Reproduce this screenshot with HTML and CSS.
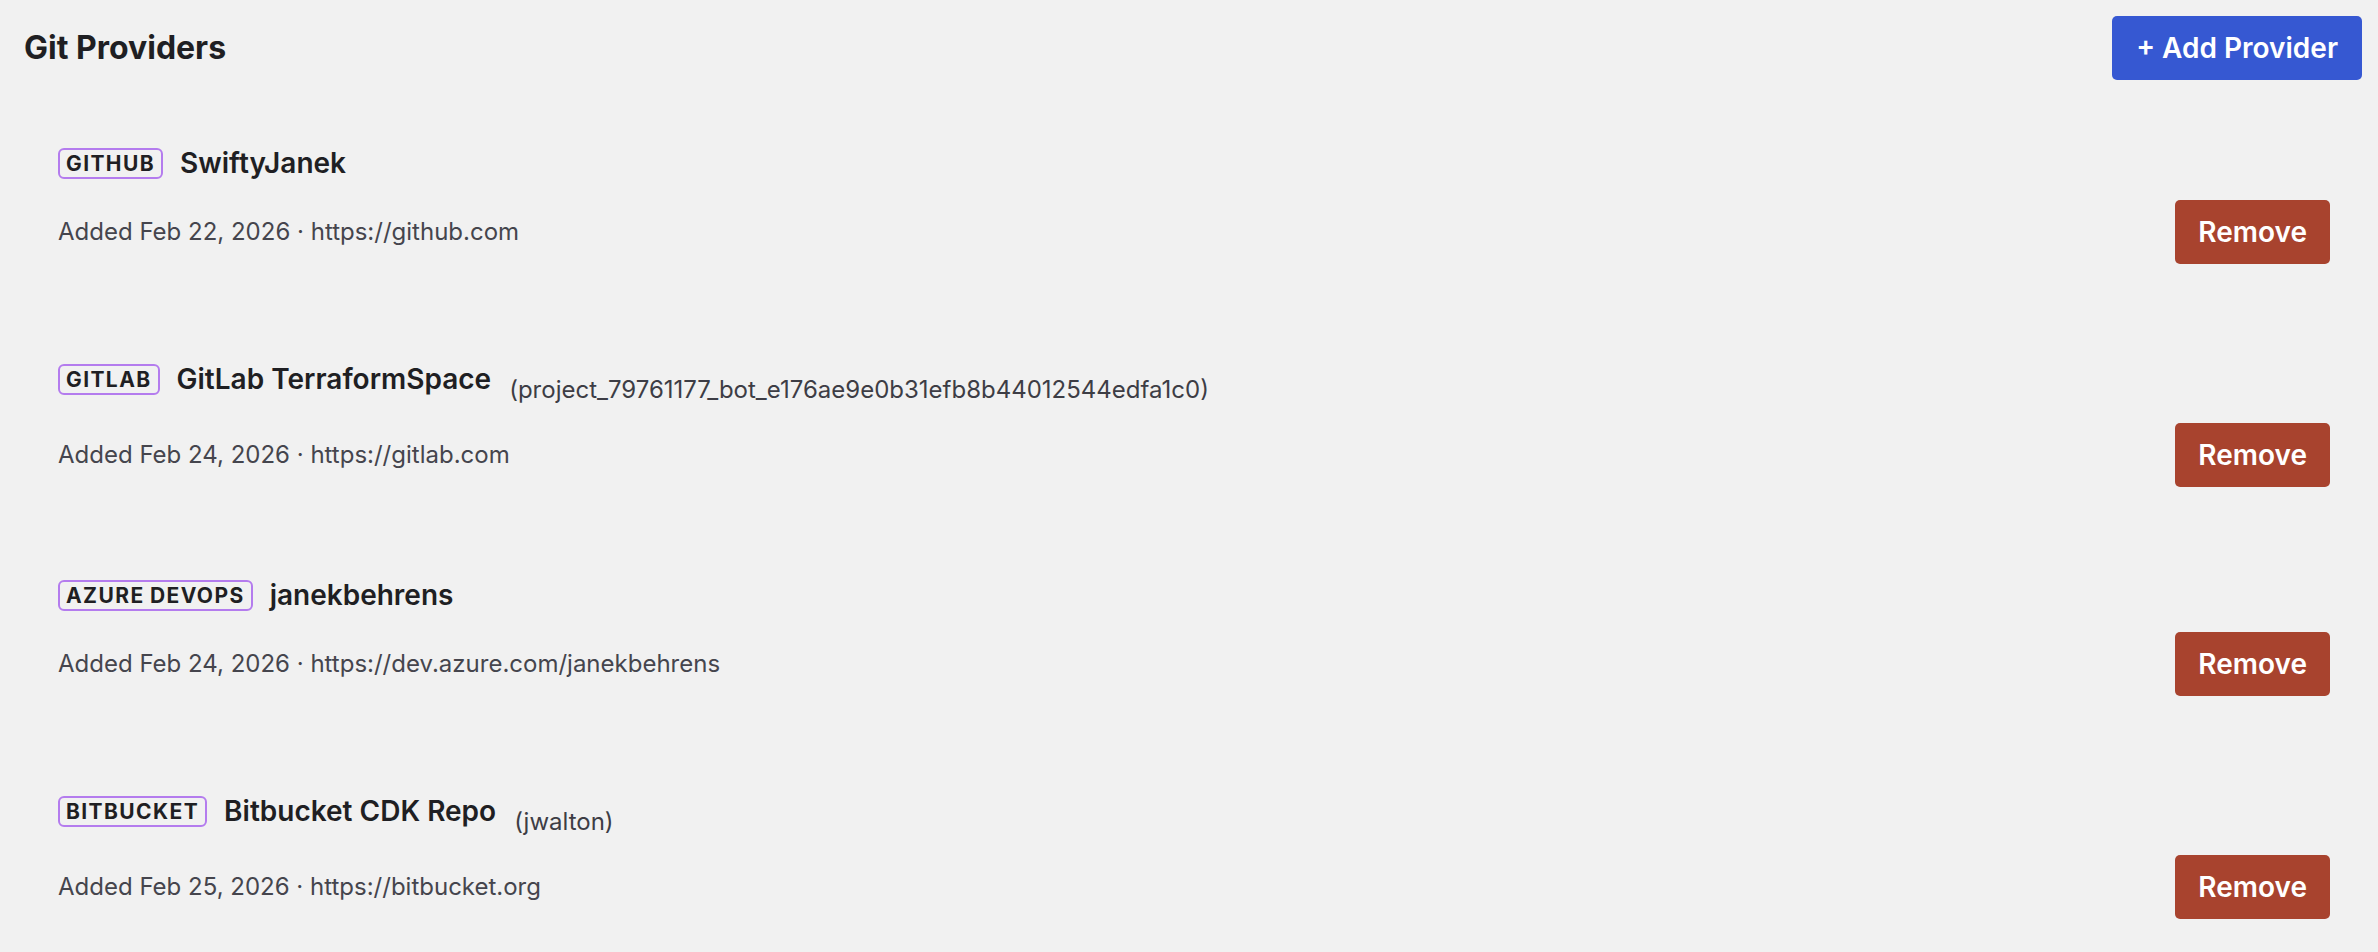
FILE: index.html
```html
<!DOCTYPE html>
<html lang="en">
<head>
<meta charset="utf-8">
<title>Git Providers</title>
<link rel="stylesheet" href="styles.css">
</head>
<body>
<div class="page">
  <header class="header">
    <h1 class="title">Git Providers</h1>
    <button class="btn btn-primary">+ Add Provider</button>
  </header>
  <ul class="list">
    <li class="item">
      <div class="head">
        <span class="badge">GITHUB</span>
        <span class="name">SwiftyJanek</span>
      </div>
      <div class="foot">
        <span class="meta">Added Feb 22, 2026 · https://github.com</span>
        <button class="btn btn-danger">Remove</button>
      </div>
    </li>
    <li class="item">
      <div class="head">
        <span class="badge">GITLAB</span>
        <span class="name">GitLab TerraformSpace</span>
        <span class="extra">(project_79761177_bot_e176ae9e0b31efb8b44012544edfa1c0)</span>
      </div>
      <div class="foot">
        <span class="meta">Added Feb 24, 2026 · https://gitlab.com</span>
        <button class="btn btn-danger">Remove</button>
      </div>
    </li>
    <li class="item">
      <div class="head">
        <span class="badge">AZURE DEVOPS</span>
        <span class="name">janekbehrens</span>
      </div>
      <div class="foot">
        <span class="meta">Added Feb 24, 2026 · https://dev.azure.com/janekbehrens</span>
        <button class="btn btn-danger">Remove</button>
      </div>
    </li>
    <li class="item">
      <div class="head">
        <span class="badge">BITBUCKET</span>
        <span class="name">Bitbucket CDK Repo</span>
        <span class="extra">(jwalton)</span>
      </div>
      <div class="foot">
        <span class="meta">Added Feb 25, 2026 · https://bitbucket.org</span>
        <button class="btn btn-danger">Remove</button>
      </div>
    </li>
  </ul>
</div>
</body>
</html>
```

FILE: styles.css
```css
* {
  box-sizing: border-box;
}

html,
body {
  margin: 0;
  padding: 0;
  background: #f1f1f1;
}

body {
  font-family: Inter, "Noto Sans", "Liberation Sans", sans-serif;
  color: #1f1f23;
}

.page {
  padding: 16px 16px 0 24px;
}

.header {
  display: flex;
  justify-content: space-between;
  align-items: center;
  height: 64px;
  margin-bottom: 16px;
}

.title {
  margin: 0;
  font-size: 32px;
  line-height: 40px;
  font-weight: 700;
  color: #1f1f23;
}

.btn {
  border: none;
  border-radius: 5px;
  font-family: Inter, "Noto Sans", "Liberation Sans", sans-serif;
  font-size: 28px;
  font-weight: 600;
  line-height: 40px;
  padding: 12px 24px;
  color: #ffffff;
  cursor: pointer;
}

.btn-primary {
  background: #3658d2;
}

.btn-danger {
  background: #a8432e;
  padding: 12px 23px;
}

.list {
  list-style: none;
  margin: 0;
  padding: 0 32px 0 34px;
  display: grid;
  grid-auto-rows: 1fr;
}

.item {
  padding: 52px 0 41px 0;
}

.head {
  display: flex;
  align-items: flex-start;
  min-height: 31px;
}

.badge {
  display: inline-block;
  border: 2px solid #b47cee;
  border-radius: 6px;
  padding: 2px 6px;
  font-size: 21px;
  line-height: 23px;
  font-weight: 700;
  letter-spacing: 1.4px;
  word-spacing: -1px;
  color: #1f1f23;
}

.name {
  margin-left: 17px;
  font-size: 28px;
  line-height: 31px;
  font-weight: 600;
  color: #1f1f23;
}

.extra {
  margin-left: 18px;
  margin-top: 14px;
  font-size: 24px;
  line-height: 24px;
  color: #3d3d45;
}

.foot {
  display: flex;
  justify-content: space-between;
  align-items: center;
  margin-top: 21px;
}

.meta {
  font-size: 24px;
  line-height: 32px;
  color: #45454d;
}
```
